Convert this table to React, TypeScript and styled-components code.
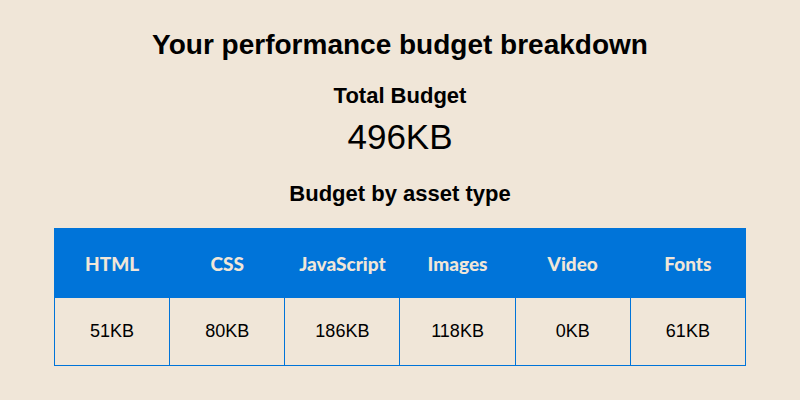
import React from 'react';
import styled, { createGlobalStyle } from 'styled-components';

const GlobalStyle = createGlobalStyle`
  html, body {
    margin: 0;
    padding: 0;
    background: #f0e6d8;
  }
  body {
    font-family: 'Liberation Sans', Arial, sans-serif;
    color: #000;
  }
`;

const Page = styled.div`
  width: 800px;
  height: 400px;
  display: flex;
  flex-direction: column;
  align-items: center;
  padding-top: 28px;
  box-sizing: border-box;
`;

const Title = styled.h1`
  font-size: 28px;
  font-weight: 700;
  margin: 0;
  line-height: 34px;
`;

const SubTitle = styled.h2<{ $top?: number }>`
  font-size: 22px;
  font-weight: 700;
  margin: 0;
  line-height: 26px;
  margin-top: ${props => props.$top || 0}px;
`;

const Total = styled.div`
  font-size: 35px;
  line-height: 40px;
  margin-top: 8px;
`;

const Table = styled.table`
  width: 692px;
  margin-top: 21px;
  border-collapse: collapse;
  table-layout: fixed;
  border: 1px solid #0074d9;
`;

const HeadCell = styled.th`
  background: #0074d9;
  color: #f0e6d8;
  font-family: Lato, 'Liberation Sans', sans-serif;
  font-weight: 900;
  font-size: 19px;
  height: 68px;
  padding: 0;
  text-align: center;
  border: 1px solid #0074d9;
`;

const Cell = styled.td`
  font-size: 18px;
  height: 67px;
  padding: 0;
  text-align: center;
  border: 1px solid #0074d9;
`;

const assets = [
  { name: 'HTML', size: '51KB' },
  { name: 'CSS', size: '80KB' },
  { name: 'JavaScript', size: '186KB' },
  { name: 'Images', size: '118KB' },
  { name: 'Video', size: '0KB' },
  { name: 'Fonts', size: '61KB' },
];

const App: React.FC = () => {
  return (
    <>
      <GlobalStyle />
      <Page>
        <Title>Your performance budget breakdown</Title>
        <SubTitle $top={21}>Total Budget</SubTitle>
        <Total>496KB</Total>
        <SubTitle $top={24}>Budget by asset type</SubTitle>
        <Table>
          <thead>
            <tr>
              {assets.map(a => (
                <HeadCell key={a.name}>{a.name}</HeadCell>
              ))}
            </tr>
          </thead>
          <tbody>
            <tr>
              {assets.map(a => (
                <Cell key={a.name}>{a.size}</Cell>
              ))}
            </tr>
          </tbody>
        </Table>
      </Page>
    </>
  );
};

export default App;
